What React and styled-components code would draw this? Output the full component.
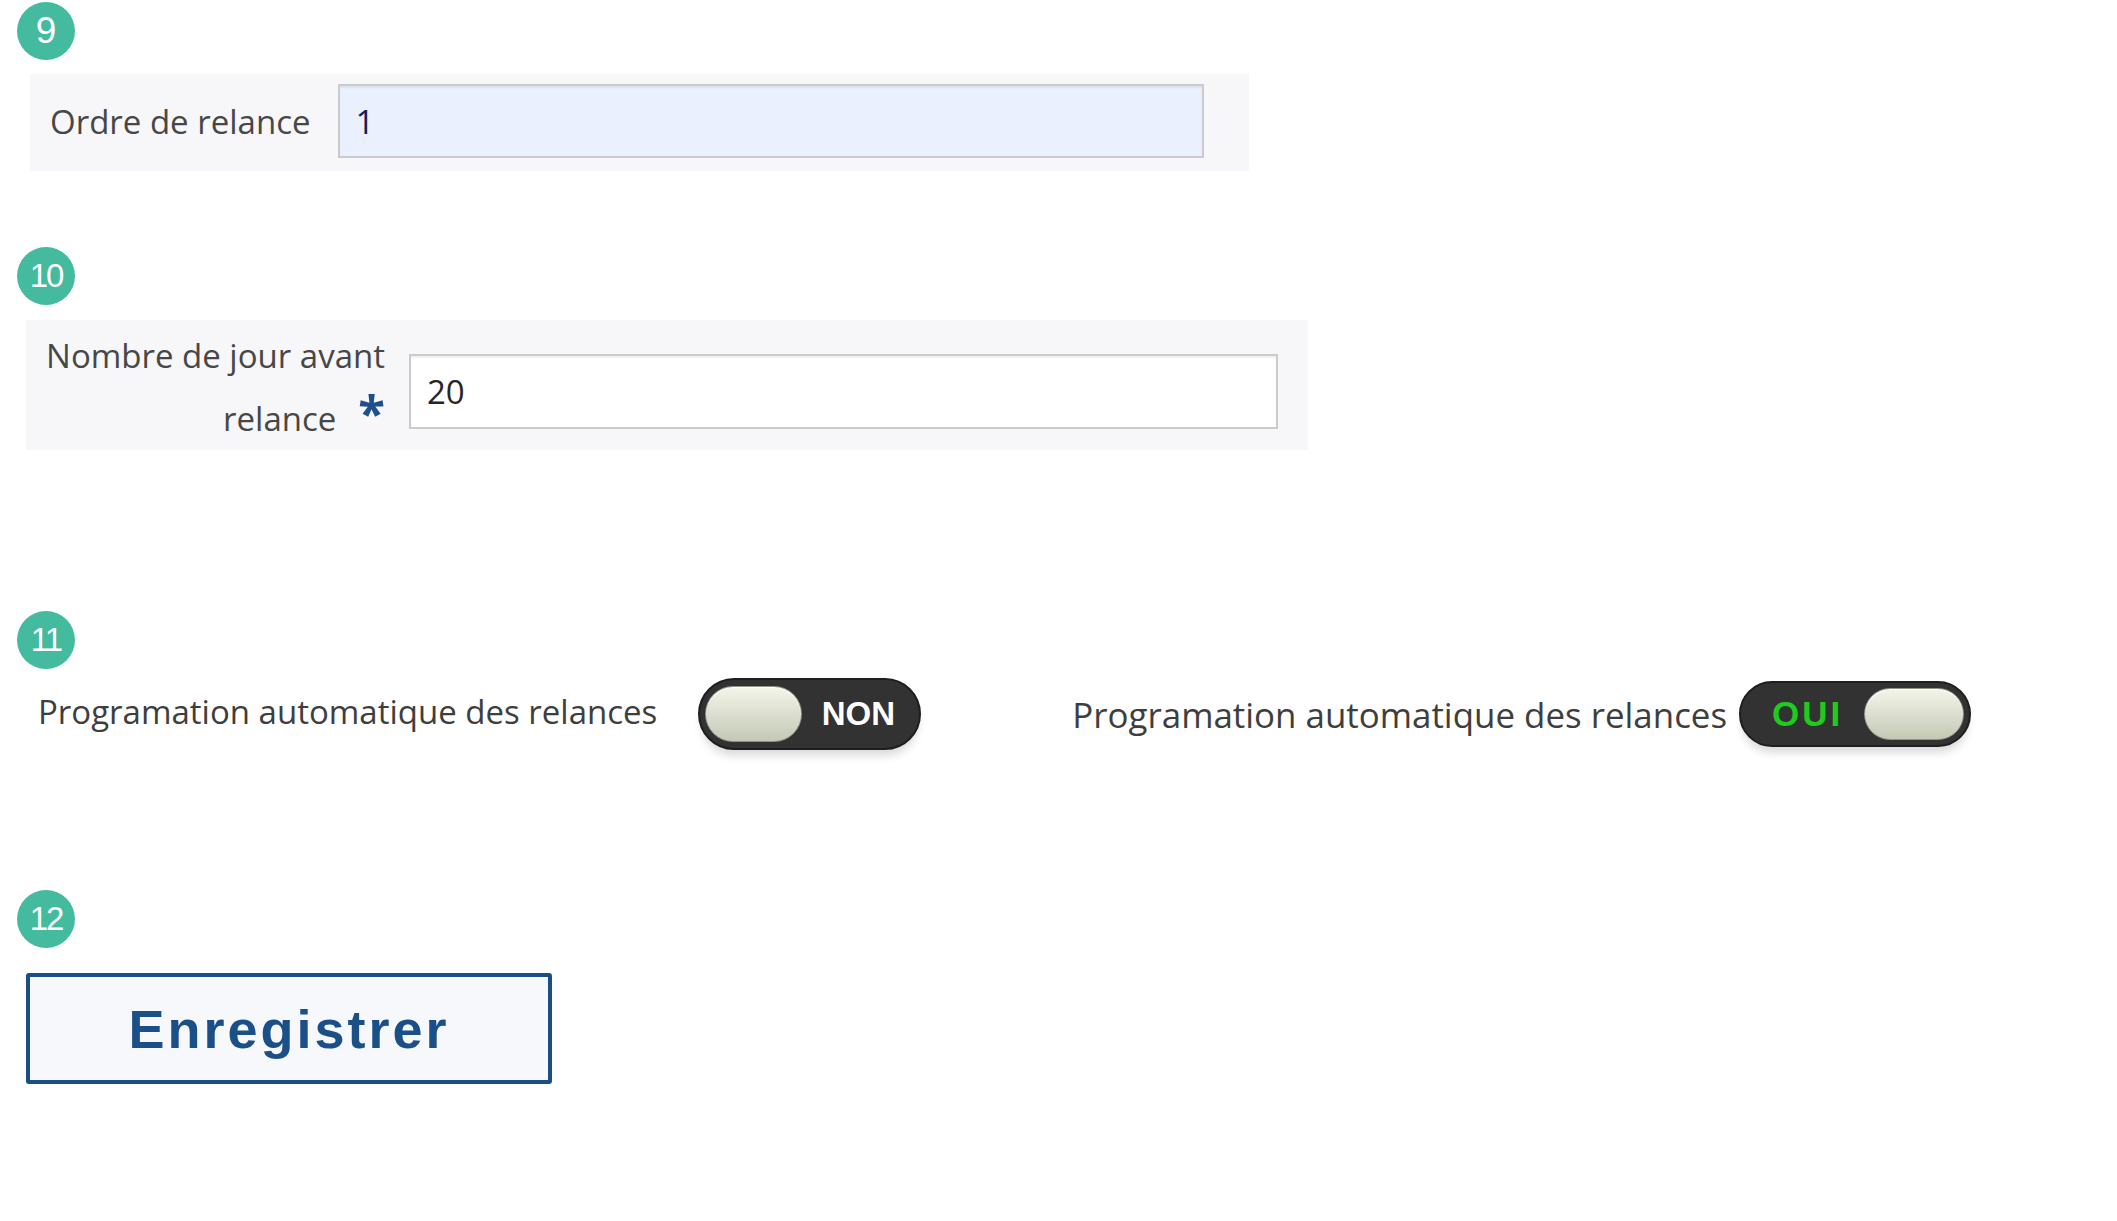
import styled, { createGlobalStyle } from "styled-components";

const GlobalStyle = createGlobalStyle`
  body {
    margin: 0;
    background: #ffffff;
    font-family: "Open Sans", "Liberation Sans", sans-serif;
  }
`;

const Page = styled.div`
  display: flex;
  flex-direction: column;
  align-items: flex-start;
  padding: 2px 0 0 17px;
  width: 2117px;
  min-height: 1221px;
  box-sizing: border-box;
`;

const Badge = styled.div`
  width: 58px;
  height: 58px;
  border-radius: 50%;
  background: #44ba9e;
  color: #ffffff;
  display: flex;
  align-items: center;
  justify-content: center;
  font-family: "Liberation Sans", Arial, sans-serif;
  font-size: ${(p) => (p.$wide ? "33px" : "37px")};
  letter-spacing: ${(p) => (p.$wide ? "-2px" : "0")};
  margin-top: ${(p) => p.$top}px;
`;

const Panel = styled.div`
  display: flex;
  align-items: center;
  background: #f7f7f9;
  box-sizing: border-box;
  width: ${(p) => p.$w}px;
  margin-left: ${(p) => p.$left}px;
  margin-top: ${(p) => p.$top}px;
  padding: ${(p) => p.$pad};
  gap: ${(p) => p.$gap}px;
`;

const Label = styled.label`
  display: flex;
  flex-direction: column;
  align-items: flex-end;
  font-family: "Open Sans", sans-serif;
  font-size: 33px;
  color: #474747;
  line-height: ${(p) => p.$lh || "normal"};
  width: ${(p) => (p.$w ? `${p.$w}px` : "auto")};
  flex-shrink: 0;
`;

const LabelLine = styled.span`
  white-space: nowrap;
`;

const Required = styled.span`
  display: inline-block;
  font-family: "Open Sans", sans-serif;
  font-weight: 700;
  font-size: 49px;
  line-height: 30px;
  height: 30px;
  color: #1e4f8c;
  margin-left: 22px;
`;

const Field = styled.div`
  flex: 1;
  height: ${(p) => p.$h}px;
  margin-top: ${(p) => p.$mt || 0}px;
  box-sizing: border-box;
  border: 2px solid #cbcbcb;
  box-shadow: inset 0 2px 2px rgba(0, 0, 0, 0.06);
  background: ${(p) => (p.$filled ? "#eaf0fd" : "#ffffff")};
  display: flex;
  align-items: center;
  padding-left: 16px;
  font-family: "Open Sans", sans-serif;
  font-size: 33px;
  color: ${(p) => (p.$filled ? "#1b1b55" : "#262626")};
`;

const SwitchRow = styled.div`
  display: flex;
  align-items: center;
  margin-left: 21px;
  margin-top: 9px;
`;

const SwitchGroup = styled.div`
  display: flex;
  align-items: center;
  gap: ${(p) => p.$gap}px;
  margin-left: ${(p) => p.$left || 0}px;
`;

const SwitchText = styled.span`
  font-family: "Open Sans", sans-serif;
  font-size: ${(p) => p.$size}px;
  color: #3e3e3e;
  white-space: nowrap;
  margin-bottom: ${(p) => p.$raise || 0}px;
`;

const Track = styled.div`
  width: ${(p) => p.$w}px;
  height: ${(p) => p.$h}px;
  box-sizing: border-box;
  border-radius: ${(p) => p.$h / 2}px;
  background: #323232;
  border: 2px solid #1e1e1e;
  box-shadow: 0 9px 8px -3px rgba(0, 0, 0, 0.14);
  display: flex;
  align-items: center;
  flex-direction: ${(p) => (p.$on ? "row-reverse" : "row")};
  padding: 0 5px;
`;

const Knob = styled.div`
  width: ${(p) => p.$w}px;
  height: ${(p) => p.$h}px;
  box-sizing: border-box;
  border-radius: ${(p) => p.$h / 2}px;
  background: linear-gradient(#f3f5ea, #c4c9b6);
  border: 1px solid #8f9285;
  box-shadow: inset 0 1px 1px #ffffff;
  flex-shrink: 0;
`;

const TrackLabel = styled.span`
  flex: 1;
  font-family: "Liberation Sans", Arial, sans-serif;
  font-weight: 700;
  font-size: ${(p) => (p.$on ? "35px" : "33px")};
  letter-spacing: ${(p) => (p.$on ? "3px" : "0")};
  color: ${(p) => (p.$on ? "#1fcb1f" : "#ffffff")};
  padding-left: ${(p) => (p.$on ? "26px" : "0")};
  text-align: ${(p) => (p.$on ? "left" : "center")};
`;

const SaveButton = styled.button`
  width: 526px;
  height: 111px;
  margin-left: 9px;
  margin-top: 25px;
  box-sizing: border-box;
  border: 4px solid #1b4d86;
  border-radius: 3px;
  background: #f7f8fb;
  color: #1b4f87;
  font-family: "Liberation Sans", Arial, sans-serif;
  font-weight: 700;
  font-size: 54px;
  letter-spacing: 3px;
  padding: 0;
  cursor: pointer;
`;

const Toggle = ({ on, w, h, kw, kh }) => (
  <Track $on={on} $w={w} $h={h}>
    <Knob $w={kw} $h={kh} />
    <TrackLabel $on={on}>{on ? "OUI" : "NON"}</TrackLabel>
  </Track>
);

export default function App() {
  return (
    <>
      <GlobalStyle />
      <Page>
        <Badge $top={0}>9</Badge>
        <Panel $w={1219} $left={13} $top={14} $pad="10px 45px 13px 20px" $gap={27}>
          <Label>Ordre de relance</Label>
          <Field $h={74} $filled>1</Field>
        </Panel>

        <Badge $top={76} $wide>10</Badge>
        <Panel $w={1282} $left={9} $top={15} $pad="4px 30px 0 17px" $gap={24}>
          <Label $w={342} $lh="63px">
            <LabelLine>Nombre de jour avant</LabelLine>
            <LabelLine>
              relance<Required>*</Required>
            </LabelLine>
          </Label>
          <Field $h={75} $mt={8}>20</Field>
        </Panel>

        <Badge $top={161} $wide>11</Badge>
        <SwitchRow>
          <SwitchGroup $gap={41}>
            <SwitchText $size={33} $raise={6}>Programation automatique des relances</SwitchText>
            <Toggle w={223} h={72} kw={97} kh={56} />
          </SwitchGroup>
          <SwitchGroup $gap={12} $left={151}>
            <SwitchText $size={34.9}>Programation automatique des relances</SwitchText>
            <Toggle on w={232} h={66} kw={100} kh={52} />
          </SwitchGroup>
        </SwitchRow>

        <Badge $top={140} $wide>12</Badge>
        <SaveButton>Enregistrer</SaveButton>
      </Page>
    </>
  );
}
